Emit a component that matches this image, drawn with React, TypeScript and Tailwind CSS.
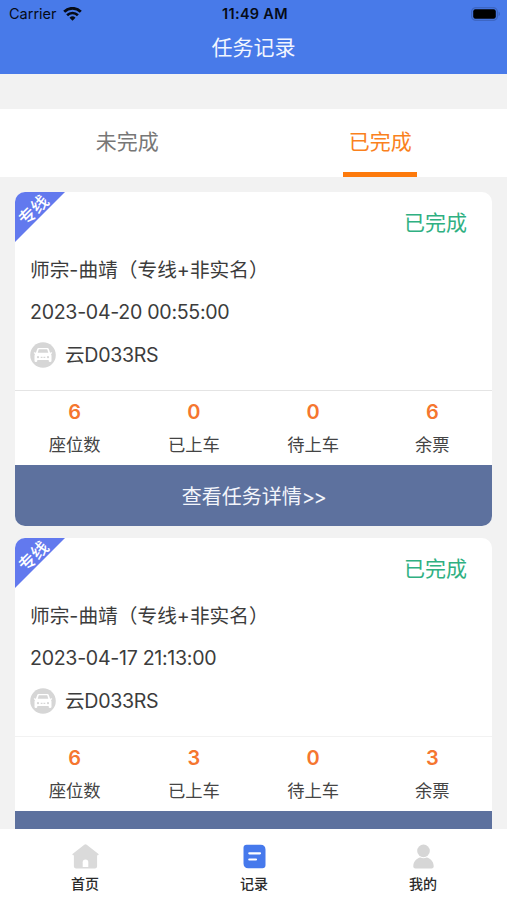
type Task = {
  id: number;
  route: string;
  time: string;
  plate: string;
  divider: string;
  stats: { label: string; value: number }[];
};

const tasks: Task[] = [
  {
    id: 1,
    route: "师宗-曲靖（专线+非实名）",
    time: "2023-04-20 00:55:00",
    plate: "云D033RS",
    divider: "border-[#e4e4e4]",
    stats: [
      { label: "座位数", value: 6 },
      { label: "已上车", value: 0 },
      { label: "待上车", value: 0 },
      { label: "余票", value: 6 },
    ],
  },
  {
    id: 2,
    route: "师宗-曲靖（专线+非实名）",
    time: "2023-04-17 21:13:00",
    plate: "云D033RS",
    divider: "border-[#f2f2f2]",
    stats: [
      { label: "座位数", value: 6 },
      { label: "已上车", value: 3 },
      { label: "待上车", value: 0 },
      { label: "余票", value: 3 },
    ],
  },
];

function WifiIcon() {
  return (
    <svg className="w-[19px] h-[14px]" viewBox="0 0 19 14" fill="none" stroke="#060b16" aria-hidden="true">
      <path d="M1.2 4.700a11.8 11.8 0 0 1 16.6 0" strokeWidth="2.8" />
      <path d="M4.1 8.2a7.7 7.7 0 0 1 10.8 0" strokeWidth="2.6" />
      <path d="M9.5 13.8 6.500 10.800a4.300 4.300 0 0 1 6 0Z" fill="#060b16" stroke="none" />
    </svg>
  );
}

function BatteryIcon() {
  return (
    <svg className="w-[30px] h-[14px]" viewBox="0 0 30 14" fill="none" aria-hidden="true">
      <rect x="0.7" y="0.7" width="25.6" height="12.6" rx="3.8" stroke="#3a60b8" strokeWidth="1.1" />
      <rect x="2.2" y="2.2" width="22.6" height="9.6" rx="2.2" fill="#000" />
      <path d="M27.6 4.8c1.6.6 1.6 3.8 0 4.4Z" fill="#3a60b8" />
    </svg>
  );
}

function CarIcon() {
  return (
    <svg className="w-[26px] h-[26px] shrink-0" viewBox="0 0 26 26" aria-hidden="true">
      <circle cx="13" cy="13" r="12.8" fill="#d6d6d6" />
      <path
        d="M8.6 6h8.8c.7 0 1.2.4 1.4 1l1.3 3.8 1.5-.5c.6-.1.9.8.3 1.1l-1 .6c.4.5.6 1 .6 1.7v5.1c0 .7-.4 1.2-1 1.2h-.8c-.6 0-1-.5-1-1.2v-.9H7.3v.9c0 .7-.4 1.2-1 1.2h-.8c-.6 0-1-.5-1-1.2v-5.1c0-.7.2-1.2.6-1.7l-1-.6c-.6-.3-.3-1.2.3-1.1l1.500.5L7.200 7c.2-.6.7-1 1.400-1Z"
        fill="#fff"
      />
      <path d="M8.8 7.2h8.400l1.100 3.600H7.700Z" fill="#d6d6d6" />
      <circle cx="8" cy="15.2" r="1.1" fill="#d6d6d6" />
      <circle cx="18" cy="15.2" r="1.1" fill="#d6d6d6" />
      <path d="M10.7 15.3h1.800M13.500 15.300h1.800" stroke="#d6d6d6" strokeWidth="1.3" />
    </svg>
  );
}

function HomeIcon() {
  return (
    <svg className="w-[27px] h-[25px]" viewBox="0 0 27 25" aria-hidden="true">
      <path
        d="M12.3.8a1.800 1.800 0 0 1 2.400 0L26.200 9.700c.8.700.5 1.500-.4 1.500h-.7v11.100c0 1.300-.9 2.200-2.200 2.200H4.100c-1.300 0-2.200-.9-2.200-2.200V11.200h-.7c-.9 0-1.200-.8-.4-1.500Z"
        fill="#dadada"
      />
      <path d="M10.7 23v-4.700a2.800 2.800 0 0 1 5.600 0V23Z" fill="#fff" />
    </svg>
  );
}

function RecordIcon() {
  return (
    <svg className="w-[23px] h-[25px]" viewBox="0 0 23 25" aria-hidden="true">
      <path
        d="M3.5.7h14.300c2.800 0 4.700 2 4.700 4.800v15.800c0 1.800-1.200 3-3 3H5.200C2.400 24.300.5 22.300.5 19.500V3.700c0-1.800 1.200-3 3-3Z"
        fill="#4679ec"
      />
      <path d="M6.3 9.3h10.700M6.300 15.500h6.700" stroke="#fff" strokeWidth="2.2" strokeLinecap="round" />
    </svg>
  );
}

function UserIcon() {
  return (
    <svg className="w-[21px] h-[25px]" viewBox="0 0 21 25" fill="#d6d6d6" aria-hidden="true">
      <circle cx="10.5" cy="6.9" r="6.3" />
      <path d="M.3 22.300C.3 17.300 4 14.200 7.300 13.600c2 .9 4.400.9 6.400 0 3.300.6 7 3.700 7 8.700 0 1.300-.7 2.100-2 2.100H2.300c-1.300 0-2-.8-2-2.100Z" />
    </svg>
  );
}

function TaskCard({ task }: { task: Task }) {
  return (
    <article className="relative h-[334px] shrink-0 flex flex-col bg-white rounded-[10px] overflow-hidden">
      <div className="absolute top-0 left-0 w-[50px] h-[50px] bg-[#6279ee] [clip-path:polygon(0_0,100%_0,0_100%)]" />
      <span className="absolute left-[2px] top-[10px] w-[34px] text-center text-[17px] leading-[17px] font-medium text-white -rotate-45">
        专线
      </span>

      <div className="h-[198px] px-[15px] pt-[15px] text-[#3c3c3c]">
        <p className="pr-[10px] text-right text-[21px] leading-[31px] text-[#2fb082]">已完成</p>
        <p className="mt-[17px] text-[19.7px] leading-[31px]">{task.route}</p>
        <p className="mt-[11px] text-[19.6px] leading-[30px] tracking-[-0.3px]">{task.time}</p>
        <p className="mt-[13px] flex items-center gap-[9px] text-[19.6px] leading-[30px] tracking-[-0.3px]">
          <CarIcon />
          {task.plate}
        </p>
      </div>

      <div className={`h-[75px] grid grid-cols-4 border-t ${task.divider}`}>
        {task.stats.map((stat) => (
          <div key={stat.label} className="pt-[7px] text-center">
            <p className="text-[20px] leading-[28px] font-semibold text-[#f5762f]">{stat.value}</p>
            <p className="mt-[6px] text-[17.3px] leading-[26px] text-[#444]">{stat.label}</p>
          </div>
        ))}
      </div>

      <button className="h-[61px] pt-[2px] bg-[#5d719e] text-[20px] text-[#f3f5fb]">
        查看任务详情<span className="tracking-[-1.4px]">&gt;&gt;</span>
      </button>
    </article>
  );
}

export default function App() {
  return (
    <div className="h-[900px] w-full flex flex-col overflow-hidden bg-[#f2f2f2] font-['Inter','Noto_Sans_CJK_SC',sans-serif]">
      <header className="h-[74px] shrink-0 bg-[#487ae9]">
        <div className="h-[27px] grid grid-cols-3 items-center pl-[9px] pr-[6px] text-[#060b16]">
          <div className="flex items-center gap-[6px] text-[14.5px]">
            Carrier
            <WifiIcon />
          </div>
          <span className="text-center text-[14.5px] font-semibold tracking-[0.3px]">11:49 AM</span>
          <div className="flex justify-end">
            <BatteryIcon />
          </div>
        </div>
        <h1 className="text-center text-[21px] leading-[42px] text-[#f2f6ff]">任务记录</h1>
      </header>

      <div className="mt-[35px] h-[68px] shrink-0 grid grid-cols-2 bg-white text-[21px]">
        <div className="flex justify-center pl-px leading-[66px] text-[#777]">未完成</div>
        <div className="flex flex-col items-center">
          <span className="h-[63px] leading-[66px] text-[#fa811d]">已完成</span>
          <span className="w-[74px] h-[5px] shrink-0 bg-[#fd7a0c]" />
        </div>
      </div>

      <main className="flex-1 min-h-0 overflow-hidden flex flex-col gap-3 px-[15px] pt-[15px]">
        {tasks.map((task) => (
          <TaskCard key={task.id} task={task} />
        ))}
      </main>

      <nav className="h-[71px] shrink-0 grid grid-cols-3 bg-white text-[14px] font-medium text-[#2a2a2a]">
        <div className="flex flex-col items-center pt-[15px] pl-px">
          <HomeIcon />
          <span className="mt-[5px] leading-[20px]">首页</span>
        </div>
        <div className="flex flex-col items-center pt-[15px] pl-px">
          <RecordIcon />
          <span className="mt-[5px] leading-[20px]">记录</span>
        </div>
        <div className="flex flex-col items-center pt-[15px] pl-px">
          <UserIcon />
          <span className="mt-[5px] leading-[20px]">我的</span>
        </div>
      </nav>
    </div>
  );
}
